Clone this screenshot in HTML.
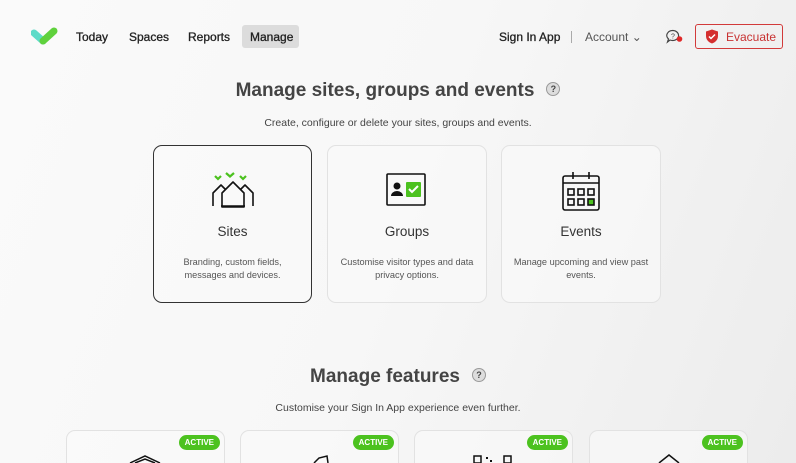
<!DOCTYPE html>
<html style="overflow:hidden;height:463px"><head><style>
*{margin:0;padding:0;box-sizing:border-box}
body{width:796px;height:463px;overflow:hidden;font-family:"Liberation Sans",sans-serif;background:linear-gradient(110deg,#fafafa 0%,#f7f7f7 50%,#ececec 100%);color:#333;position:relative}
.a{position:absolute}
.nav{font-size:12px;color:#222;top:30px;-webkit-text-stroke:0.3px #222}
.card{position:absolute;border:1px solid #e2e2e2;border-radius:9px;background:rgba(250,250,250,.6)}
.card h3{position:absolute;width:100%;text-align:center;top:78px;font-size:13.5px;font-weight:normal;color:#333}
.card p{position:absolute;width:100%;text-align:center;top:110px;font-size:9.2px;line-height:12.5px;color:#555;padding:0 10px}
.card svg{position:absolute;left:50%;transform:translateX(-50%);top:24px}
.bc{border-bottom:none;border-radius:9px 9px 0 0}
.badge{position:absolute;top:4px;right:4px;background:#4cc21f;color:#fff;font-size:8px;font-weight:bold;padding:3px 6px;border-radius:8px}
h1{position:absolute;width:100%;text-align:center;font-size:19px;color:#444}
.sub{position:absolute;width:100%;text-align:center;font-size:10.5px;color:#444}
.q{display:inline-block;width:14px;height:14px;border-radius:50%;background:#ddd;vertical-align:middle;margin-left:12px;position:relative;top:-2px;font-size:9px;line-height:12px;color:#444;border:1.5px solid #999}
</style></head><body>
<svg class="a" style="left:31px;top:27px" width="27" height="19" viewBox="0 0 27 19"><path d="M3 6 L12 14" stroke="#5ddbc8" stroke-width="7" stroke-linecap="round"/><path d="M12 14 L23 4" stroke="#5fd13c" stroke-width="7" stroke-linecap="round"/></svg>
<div class="a nav" style="left:76px">Today</div>
<div class="a nav" style="left:129px">Spaces</div>
<div class="a nav" style="left:188px">Reports</div>
<div class="a" style="left:242px;top:25px;width:57px;height:23px;background:#dcdcdc;border-radius:3px"></div>
<div class="a nav" style="left:250px">Manage</div>
<div class="a nav" style="left:499px">Sign In App</div>
<div class="a" style="left:571px;top:31px;width:1px;height:12px;background:#aaa"></div>
<div class="a nav" style="left:585px;color:#555;-webkit-text-stroke:0">Account ⌄</div>
<svg class="a" style="left:666px;top:29px" width="18" height="16" viewBox="0 0 18 16"><path d="M7 1.5a6 5 0 1 1-3 9.5L1.5 13l1-3A6 5 0 0 1 7 1.5z" fill="none" stroke="#444" stroke-width="1.2"/><text x="5" y="9.5" font-size="7" fill="#444" font-family="Liberation Sans">?</text><circle cx="13.5" cy="10" r="2.8" fill="#e02828"/></svg>
<div class="a" style="left:695px;top:24px;width:88px;height:25px;border:1.5px solid #d23a3a;border-radius:3px"></div>
<svg class="a" style="left:705px;top:29px" width="14" height="15" viewBox="0 0 14 15"><path d="M7 0.5L13 2.5V7c0 4-3 6.5-6 7.5C4 13.5 1 11 1 7V2.5z" fill="#d42f2f"/><path d="M4 7.5l2 2 4-4" stroke="#fff" stroke-width="1.5" fill="none"/></svg>
<div class="a" style="left:726px;top:30px;font-size:12px;color:#c83333">Evacuate</div>

<h1 style="top:80px">Manage sites, groups and events<span class="q">?</span></h1>
<div class="sub" style="top:117px">Create, configure or delete your sites, groups and events.</div>

<div class="card" style="left:153px;top:145px;width:159px;height:158px;border:1.5px solid #333">
<svg width="44" height="40" viewBox="0 0 44 40"><path d="M4 6l3 3 3-3M15 3l4 3.5 4-3.5M29 6l3 3 3-3" stroke="#4cc21f" stroke-width="2.2" fill="none"/><path d="M2 36V23l8-8 5 5M42 36V23l-8-8-5 5M10 36h24M11 37V23l11-11 11 11v14z" stroke="#111" stroke-width="1.6" fill="none" stroke-linejoin="round"/></svg>
<h3>Sites</h3><p>Branding, custom fields, messages and devices.</p></div>
<div class="card" style="left:327px;top:145px;width:160px;height:158px">
<svg width="42" height="36" viewBox="0 0 42 36"><rect x="1" y="4" width="38" height="31" rx="1" fill="none" stroke="#111" stroke-width="1.6"/><circle cx="11" cy="16" r="3.5" fill="#111"/><path d="M5 26a6 5 0 0 1 12 0z" fill="#111"/><rect x="20" y="12" width="15" height="15" rx="1" fill="#4cc21f"/><path d="M23 19l3 3 6-6" stroke="#fff" stroke-width="2" fill="none"/></svg>
<h3>Groups</h3><p>Customise visitor types and data privacy options.</p></div>
<div class="card" style="left:501px;top:145px;width:160px;height:158px">
<svg width="40" height="42" viewBox="0 0 40 42"><rect x="2" y="6" width="36" height="34" rx="2" fill="none" stroke="#111" stroke-width="1.6"/><path d="M2 13h36M12 2v7M28 2v7" stroke="#111" stroke-width="1.6"/><g fill="none" stroke="#111" stroke-width="1.6"><rect x="7" y="19" width="6" height="6"/><rect x="17" y="19" width="6" height="6"/><rect x="27" y="19" width="6" height="6"/><rect x="7" y="29" width="6" height="6"/><rect x="17" y="29" width="6" height="6"/></g><rect x="27" y="29" width="6" height="6" fill="#4cc21f" stroke="#111" stroke-width="1.6"/></svg>
<h3>Events</h3><p>Manage upcoming and view past events.</p></div>

<h1 style="top:366px">Manage features<span class="q">?</span></h1>
<div class="sub" style="top:402px">Customise your Sign In App experience even further.</div>

<div class="card bc" style="left:66px;top:430px;width:159px;height:33px"><span class="badge">ACTIVE</span></div>
<div class="card bc" style="left:240px;top:430px;width:159px;height:33px"><span class="badge">ACTIVE</span></div>
<div class="card bc" style="left:414px;top:430px;width:159px;height:33px"><span class="badge">ACTIVE</span></div>
<div class="card bc" style="left:589px;top:430px;width:159px;height:33px"><span class="badge">ACTIVE</span></div>
<svg class="a" style="left:128px;top:455px" width="34" height="8"><path d="M2 8L17 1l15 7M7 8l10-4 10 4" stroke="#111" stroke-width="1.5" fill="none"/></svg>
<svg class="a" style="left:312px;top:455px" width="20" height="8"><path d="M2 8l5-5 8-2 1 7" stroke="#111" stroke-width="1.5" fill="none"/></svg>
<svg class="a" style="left:472px;top:454px" width="44" height="9"><rect x="2" y="2" width="7" height="7" fill="none" stroke="#111" stroke-width="1.5"/><rect x="32" y="2" width="7" height="7" fill="none" stroke="#111" stroke-width="1.5"/><rect x="14" y="3" width="2" height="2" fill="#111"/><rect x="18" y="6" width="2" height="2" fill="#111"/></svg>
<svg class="a" style="left:657px;top:454px" width="24" height="9"><path d="M2 9l10-8 10 8" stroke="#111" stroke-width="1.5" fill="none"/></svg>
</body></html>
